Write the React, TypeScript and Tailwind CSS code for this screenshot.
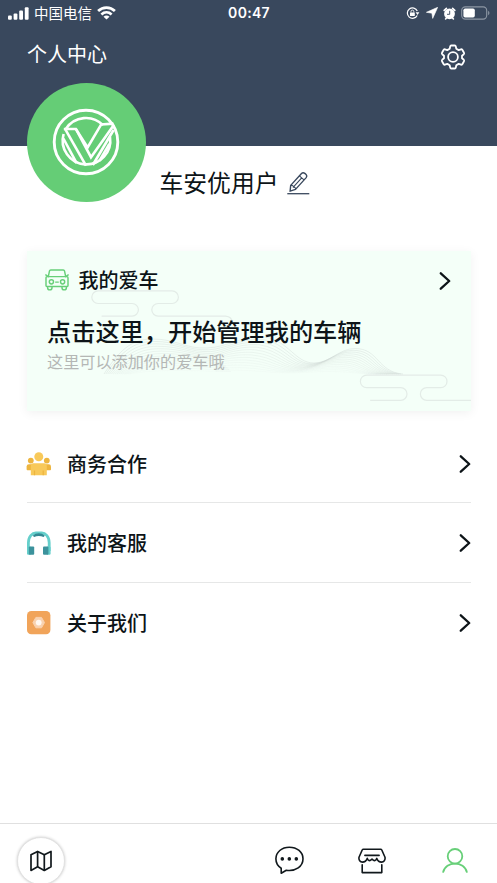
import React from 'react';

const CLOUD = 'M10 25.5 H40.5 A6.3 6.3 0 0 0 40.5 12.9 H6.5 A6.3 6.3 0 0 1 6.5 0.3 H80.5 A6.3 6.3 0 0 1 80.5 12.9 H66.5 A6.3 6.3 0 0 0 66.5 25.5';

// crest line of the hills, the lower lines are flattened copies of it
const WAVE: number[][] = [
  [77, 123],
  [92, 100], [104, 88], [125, 88],
  [150, 88], [158, 98], [180, 97],
  [202, 96], [216, 84], [238, 86],
  [262, 90], [268, 112], [287, 112],
  [303, 112], [312, 97.5], [328, 97.5],
  [352, 97.5], [350, 121], [376, 123],
];

function wavePath(k: number) {
  const pts = WAVE.map(([x, y]) => {
    const flat = 123 - (123 - y) * (1 - k * 0.9);
    const px = x + k * (x < 200 ? 24 : -26);
    return `${px.toFixed(1)} ${flat.toFixed(1)}`;
  });
  return `M${pts[0]} C${pts.slice(1).join(' ')}`;
}

const WAVES = Array.from({ length: 14 }, (_, i) => i / 13);

function StatusBar() {
  return (
    <div className="flex items-center h-[26px] pl-2 pr-[7px] text-white">
      <div className="flex flex-1 items-center">
        <svg className="w-[21px] h-[13px]" viewBox="0 0 21 13" fill="currentColor">
          <rect x="0" y="8.5" width="3.8" height="4.3" rx="1" />
          <rect x="5.6" y="6.4" width="3.8" height="6.4" rx="1" />
          <rect x="11.2" y="3.6" width="3.8" height="9.2" rx="1" />
          <rect x="16.8" y="0.2" width="3.8" height="12.6" rx="1" />
        </svg>
        <span className="ml-[5px] text-[14.5px] leading-none">中国电信</span>
        <svg className="-mt-px ml-[5px] w-[19px] h-[14px]" viewBox="0 0 19 14" fill="none" stroke="currentColor" strokeWidth="2.7">
          <path d="M1.1 5 C5.8 0.4 13.2 0.4 17.9 5" />
          <path d="M4.4 8.4 C7.4 5.7 11.6 5.7 14.6 8.4" />
          <path d="M9.5 13.6 L6.5 10.7 C8.2 9.2 10.8 9.2 12.5 10.7 Z" fill="currentColor" stroke="none" />
        </svg>
      </div>
      <span className="font-['Inter','Noto_Sans_CJK_SC',sans-serif] text-[14px] font-semibold leading-none tracking-[0.3px]">00:47</span>
      <div className="flex flex-1 items-center justify-end">
        <svg className="w-[14px] h-[12px]" viewBox="0 0 14 12" fill="none" stroke="currentColor" strokeWidth="1.2">
          <path d="M11.2 8.4 A5.2 5.2 0 1 1 11.3 4" />
          <path d="M9.6 5.2 H13.4 L11.5 8 Z" fill="currentColor" stroke="none" />
          <rect x="4" y="5.4" width="4.8" height="3.6" rx="0.5" fill="currentColor" stroke="none" />
          <path d="M5 5.6 V4.5 A1.4 1.4 0 0 1 7.8 4.5 V5.6" strokeWidth="0.9" />
        </svg>
        <svg className="ml-[6px] w-[12px] h-[12px]" viewBox="0 0 12 12" fill="currentColor">
          <path d="M11.7 0.3 L6.7 11.4 L5.9 6.2 L0.4 5.3 Z" stroke="currentColor" strokeWidth="0.6" strokeLinejoin="round" />
        </svg>
        <svg className="ml-[5px] w-[13px] h-[13px]" viewBox="0 0 13 13">
          <circle cx="6.5" cy="6.8" r="5.4" fill="currentColor" />
          <path d="M1.2 3.4 L3.4 1.4 M11.8 3.4 L9.6 1.4 M2.6 12 L3.6 10.8 M10.4 12 L9.4 10.8" stroke="currentColor" strokeWidth="1.6" strokeLinecap="round" />
          <path d="M6.7 3.8 V7.3 H4" fill="none" stroke="#39485d" strokeWidth="0.9" />
        </svg>
        <svg className="ml-[5px] w-[29px] h-[14px]" viewBox="0 0 29 14">
          <rect x="0.7" y="0.9" width="25" height="12.2" rx="3.6" fill="none" stroke="#8d97a4" strokeWidth="1.1" />
          <rect x="2.4" y="2.5" width="11.4" height="9" rx="1.8" fill="currentColor" />
          <path d="M27.1 4.8 C28.9 5.5 28.9 8.5 27.1 9.2 Z" fill="#8d97a4" />
        </svg>
      </div>
    </div>
  );
}

function GearIcon() {
  return (
    <svg className="w-[26px] h-[26px] text-white" viewBox="0 0 26 26" fill="none" stroke="currentColor" strokeWidth="1.8" strokeLinejoin="round">
      <path d="M11.2 1.5 H14.8 Q15.6 1.5 15.8 2.4 L16.3 4.7 L18.7 6.1 L21 5.3 Q21.8 5.1 22.3 5.8 L24 8.8 Q24.4 9.6 23.8 10.2 L22 11.7 V14.3 L23.8 15.8 Q24.4 16.4 24 17.2 L22.3 20.2 Q21.8 20.9 21 20.7 L18.7 19.9 L16.3 21.3 L15.8 23.6 Q15.6 24.5 14.8 24.5 H11.2 Q10.4 24.5 10.2 23.6 L9.7 21.3 L7.3 19.9 L5 20.7 Q4.2 20.9 3.7 20.2 L2 17.2 Q1.6 16.4 2.2 15.8 L4 14.3 V11.7 L2.2 10.2 Q1.6 9.6 2 8.8 L3.7 5.8 Q4.2 5.1 5 5.3 L7.3 6.1 L9.7 4.7 L10.2 2.4 Q10.4 1.5 11.2 1.5 Z" />
      <circle cx="13" cy="13" r="4.9" />
    </svg>
  );
}

function Logo() {
  return (
    <svg className="w-[68px] h-[68px]" viewBox="0 0 68 68" fill="none" stroke="white" strokeWidth="2.6">
      <circle cx="34" cy="34" r="31.8" strokeWidth="2.9" />
      {/* ring broken by the arms of the V */}
      <path d="M14 20.8 A23.8 23.8 0 0 1 51 17.2" />
      <path d="M11.6 26 A23.8 23.8 0 1 0 58 29" />
      <path d="M11.8 21 H23.9 L35.6 39.5 L49.2 16.4 L61.4 15.6" />
      <path d="M23.9 21 L39 49.2 L61.8 17" />
      <path d="M13.2 21.2 L34 57.6" />
      <path d="M11.4 30.5 L24.6 55.2" />
      <path d="M61.6 22 L40.8 57" />
      <path d="M57.4 36 L47.4 52.8" />
    </svg>
  );
}

function CarIcon() {
  return (
    <svg className="w-[24px] h-[22px]" viewBox="0 0 24 22" fill="none" stroke="#67cf78" strokeWidth="1.45" strokeLinejoin="round" strokeLinecap="round">
      <path d="M3.3 7.6 L4.5 1.9 Q4.7 0.9 5.8 0.9 H18.2 Q19.3 0.9 19.5 1.9 L20.7 7.6" />
      <path d="M0.8 5.9 L3.3 7.6 H20.7 L23.2 5.9" />
      <path d="M3.3 7.6 H2 Q1 7.6 1 8.8 V16.6 Q1 17.5 1.9 17.5 H22.1 Q23 17.5 23 16.6 V8.8 Q23 7.6 22 7.6 H20.7" />
      <circle cx="6.4" cy="12.8" r="2.1" />
      <circle cx="17.6" cy="12.8" r="2.1" />
      <path d="M10.7 13.1 H13.3" />
      <path d="M2.6 17.7 V18.7 A2.2 2.2 0 0 0 7 18.7 V17.7 M17 17.7 V18.7 A2.2 2.2 0 0 0 21.4 18.7 V17.7" />
    </svg>
  );
}

function Arrow() {
  return (
    <svg className="w-[12px] h-[18px]" viewBox="0 0 12 18" fill="none" stroke="#0d1418" strokeWidth="2.3" strokeLinecap="round" strokeLinejoin="round">
      <path d="M1.8 1.3 L10.2 9 L1.8 16.7" />
    </svg>
  );
}

function TeamIcon() {
  return (
    <svg className="w-[25px] h-[24px] overflow-visible" viewBox="0 0 25 24">
      <g fill="#edb53f">
        <circle cx="3.8" cy="8.6" r="2.9" />
        <circle cx="19.8" cy="8.6" r="2.9" />
        <path d="M-0.4 14.6 Q-0.4 12.2 2 12.2 H7 V18.2 H0.4 Q-0.4 18.2 -0.4 17.3 Z" />
        <path d="M24 14.6 Q24 12.2 21.6 12.2 H17 V18.2 H23.2 Q24 18.2 24 17.3 Z" />
      </g>
      <circle cx="11.8" cy="4.8" r="4.5" fill="#f8c95a" />
      <path d="M3.8 13.7 Q3.8 11.2 6.3 11.2 H17.3 Q19.8 11.2 19.8 13.7 V23.2 H3.8 Z" fill="#f8c95a" />
      <path d="M7.5 18.5 V23.2 M16.2 18.5 V23.2" stroke="#edb53f" strokeWidth="1.2" />
    </svg>
  );
}

function HeadsetIcon() {
  return (
    <svg className="w-[25px] h-[24px]" viewBox="0 0 25 24">
      <path d="M1.4 20 V11.8 C1.4 5 5.6 2 8.8 2 H14.8 C18 2 22.2 5 22.2 11.8 V20" fill="none" stroke="#65cfcb" strokeWidth="2.8" />
      <path d="M5.8 4.7 C9 1.4 14.6 1.4 17.8 4.7 L16.5 6 C13.6 4.6 10 4.6 7.1 6 Z" fill="#338993" />
      <rect x="0" y="15.5" width="4" height="8.2" rx="1.2" fill="#65cfcb" />
      <rect x="19.6" y="15.5" width="4" height="8.2" rx="1.2" fill="#65cfcb" />
      <rect x="1.8" y="15.5" width="5.4" height="8.2" rx="1" fill="#3c929c" />
      <rect x="16" y="15.5" width="5.4" height="8.2" rx="1" fill="#3c929c" />
    </svg>
  );
}

function AboutIcon() {
  return (
    <svg className="w-[25px] h-[24px]" viewBox="0 0 25 24">
      <rect x="0" y="0" width="23.4" height="23.2" rx="4.3" fill="#f1a45a" />
      <path d="M8.9 6.4 H14.5 L17.5 11.6 L14.5 16.8 H8.9 L5.9 11.6 Z" fill="#f9d2b0" stroke="#f9d2b0" strokeLinejoin="round" />
      <circle cx="11.7" cy="11.6" r="2.9" fill="#fff8f2" />
    </svg>
  );
}

const MENU = [
  { label: '商务合作', icon: <TeamIcon /> },
  { label: '我的客服', icon: <HeadsetIcon /> },
  { label: '关于我们', icon: <AboutIcon /> },
];

function CarCard() {
  return (
    <div className="relative mt-[49px] mx-[27px] h-[160px] w-[444px] bg-[#f4fff8] shadow-[0_2px_10px_rgba(0,0,0,0.06)]">
      <svg className="absolute inset-0 w-full h-full" viewBox="0 0 444 160" fill="none">
        <g stroke="#e3ece7" strokeWidth="1.2">
          <path d={`${CLOUD} H134 Q140.5 26 140.5 32`} transform="translate(64.6 39.6)" />
          <path d={`${CLOUD} H111`} transform="translate(333.2 123.8)" />
        </g>
        {WAVES.map(k => (
          <path key={k} d={wavePath(k)} stroke="#c9d3ce" strokeWidth="0.8" strokeOpacity={0.45 - k * 0.37} />
        ))}
      </svg>
      <div className="relative flex items-center pt-[14px] pl-[18px] pr-[20px]">
        <CarIcon />
        <span className="ml-[9.5px] flex-1 text-[20px] leading-[30px] font-medium">我的爱车</span>
        <span className="mt-[2px]"><Arrow /></span>
      </div>
      <p className="relative mt-[19px] ml-[20px] text-[24.2px] leading-[34px] font-medium whitespace-nowrap">点击这里，开始管理我的车辆</p>
      <p className="relative ml-[20px] mt-px text-[16.15px] leading-[24px] text-[#b4b7b5]">这里可以添加你的爱车哦</p>
    </div>
  );
}

function TabBar() {
  return (
    <div className="flex h-[60px] border-t border-[#e0e0e0] overflow-hidden text-[#11181c]">
      <div className="ml-[17px] mt-[13px] flex w-12 h-12 shrink-0 items-center justify-center rounded-full border border-[#e2e2e2] bg-white shadow-[0_0_3px_rgba(0,0,0,0.22)]">
        <svg className="w-[22px] h-[22px]" viewBox="0 0 22 22" fill="none" stroke="currentColor" strokeWidth="1.7" strokeLinejoin="round">
          <path d="M1 4.8 L7.6 1.4 L14.3 4.8 L21 1.4 V16.8 L14.3 20.4 L7.6 16.8 L1 20.4 Z" />
          <path d="M7.6 1.4 V16.8 M14.3 4.8 V20.4" />
        </svg>
      </div>
      <svg className="ml-[210px] mt-[22px] w-[29px] h-[29px] shrink-0" viewBox="0 0 29 29" fill="none" stroke="currentColor" strokeWidth="1.6" strokeLinejoin="round">
        <path d="M6.2 22.2 V27.3 L11.3 24.2 C20.8 25.6 28 20.4 28 12.8 C28 6.1 22 1.2 14.3 1.2 C6.8 1.2 0.9 6.1 0.9 12.8 C0.9 16.8 2.9 20.2 6.2 22.2 Z" />
        <g fill="currentColor" stroke="none">
          <circle cx="7.3" cy="12.9" r="1.8" />
          <circle cx="14.3" cy="12.9" r="1.8" />
          <circle cx="21.3" cy="12.9" r="1.8" />
        </g>
      </svg>
      <svg className="ml-[54px] mt-[24px] w-[28px] h-[26px] shrink-0" viewBox="0 0 28 26" fill="none" stroke="currentColor" strokeWidth="1.6" strokeLinejoin="round" strokeLinecap="round">
        <path d="M5.4 1.2 H22.6 Q23.4 1.2 23.8 2 L27 9.3 C27.5 12.3 25.8 14.1 23.6 14.1 C21.4 14.1 19.6 12.7 18.7 10.4 C18.2 12.6 16.4 13.8 14 11 C11.6 13.8 9.8 12.6 9.3 10.4 C8.4 12.7 6.6 14.1 4.4 14.1 C2.2 14.1 0.5 12.3 1 9.3 L4.2 2 Q4.6 1.2 5.4 1.2 Z" />
        <path d="M6.9 7.4 H21.1 M4.2 16.8 V24.6 H23.8 V16.8" />
      </svg>
      <svg className="ml-[56px] mt-[24px] w-[26px] h-[26px] shrink-0" viewBox="0 0 26 26" fill="none" stroke="#67cf78" strokeWidth="1.8">
        <circle cx="13" cy="8.3" r="7.3" />
        <path d="M1 24.6 C3.6 12.6 22.4 12.6 25 24.6" />
      </svg>
    </div>
  );
}

export default function App() {
  return (
    <div className="flex flex-col w-[497px] h-[883px] overflow-hidden bg-white text-[#0d1418] font-['Noto_Sans_CJK_SC',sans-serif]">
      <header className="h-[146px] shrink-0 bg-[#39485d]">
        <StatusBar />
        <div className="flex items-start justify-between pl-[27px] pr-[31px] text-white">
          <h1 className="mt-[13px] text-[20px] leading-[30px]">个人中心</h1>
          <div className="mt-[18px]"><GearIcon /></div>
        </div>
      </header>

      {/* Profile */}
      <div className="relative -mt-[63px] ml-[27px] flex h-[119px] shrink-0">
        <div className="flex w-[119px] h-[119px] items-center justify-center rounded-full bg-[#65cd76] pr-[2px] pb-[2px]">
          <Logo />
        </div>
        <div className="flex items-start pt-[81px] pl-[13.5px]">
          <span className="text-[23.8px] leading-[36px]">车安优用户</span>
          <svg className="mt-[7px] ml-[8.5px] w-[23px] h-[24px]" viewBox="0 0 23 24" fill="none" stroke="#39485d" strokeWidth="1.4" strokeLinejoin="round">
            <path d="M3.1 20.2 L3.7 14.4 L14.5 2.5 Q16 1 17.8 2.4 L19.1 3.5 Q20.5 5 19.2 6.6 L8.5 18.4 Z" />
            <path d="M3.7 14.4 Q6.5 14 6.3 16.2 Q8.8 15.8 8.5 18.4 M12.4 4.8 L17 8.9 M14.7 6.9 L6.3 16.2" strokeWidth="1.1" />
            <path d="M0.3 22.7 H22.3" strokeWidth="1.3" />
          </svg>
        </div>
      </div>

      <CarCard />

      {/* Menu */}
      <ul className="mt-[12.5px] mx-[27px] w-[444px] flex-1">
        {MENU.map((item, i) => (
          <li
            key={item.label}
            className={`flex h-[79.5px] items-center pt-[2px] ${i < MENU.length - 1 ? 'border-b border-[#e6e7e7]' : ''}`}
          >
            {item.icon}
            <span className="ml-[15px] flex-1 text-[20px] leading-[30px] font-medium">{item.label}</span>
            <Arrow />
          </li>
        ))}
      </ul>

      <TabBar />
    </div>
  );
}
